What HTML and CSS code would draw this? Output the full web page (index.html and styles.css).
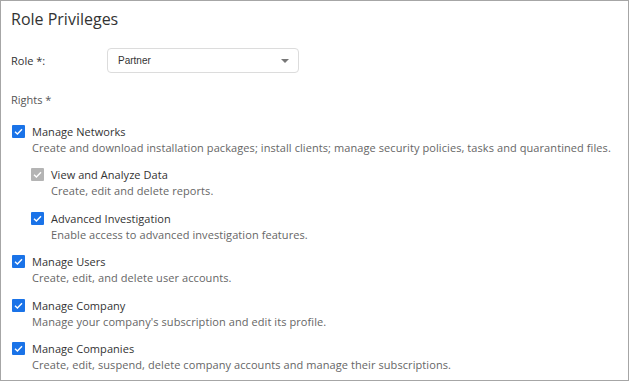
FILE: index.html
```html
<!DOCTYPE html>
<html lang="en">
<head>
  <meta charset="UTF-8">
  <title>Role Privileges</title>
  <link rel="stylesheet" href="styles.css">
</head>
<body>
  <div class="panel">
    <h2 class="title">Role Privileges</h2>

    <div class="field">
      <label class="field-label">Role *:</label>
      <div class="select">
        <span>Partner</span>
        <span class="caret"></span>
      </div>
    </div>

    <div class="rights-label">Rights *</div>

    <div class="right first">
      <span class="check"></span>
      <div>
        <div class="right-name">Manage Networks</div>
        <div class="right-desc">Create and download installation packages; install clients; manage security policies, tasks and quarantined files.</div>
      </div>
    </div>

    <div class="right sub">
      <span class="check disabled"></span>
      <div>
        <div class="right-name">View and Analyze Data</div>
        <div class="right-desc">Create, edit and delete reports.</div>
      </div>
    </div>

    <div class="right sub">
      <span class="check"></span>
      <div>
        <div class="right-name">Advanced Investigation</div>
        <div class="right-desc">Enable access to advanced investigation features.</div>
      </div>
    </div>

    <div class="right">
      <span class="check"></span>
      <div>
        <div class="right-name">Manage Users</div>
        <div class="right-desc">Create, edit, and delete user accounts.</div>
      </div>
    </div>

    <div class="right">
      <span class="check"></span>
      <div>
        <div class="right-name">Manage Company</div>
        <div class="right-desc">Manage your company's subscription and edit its profile.</div>
      </div>
    </div>

    <div class="right">
      <span class="check"></span>
      <div>
        <div class="right-name">Manage Companies</div>
        <div class="right-desc">Create, edit, suspend, delete company accounts and manage their subscriptions.</div>
      </div>
    </div>
  </div>
</body>
</html>
```

FILE: styles.css
```css
* {
  box-sizing: border-box;
}

body {
  margin: 0;
  padding: 0;
  background: white;
  font-family: 'Open Sans', sans-serif;
  color: #333;
}

.panel {
  width: 629px;
  height: 381px;
  border: 1px solid #a6a6a6;
  padding: 8px 10px 0 10px;
  overflow: hidden;
}

.title {
  margin: 0;
  font-size: 16px;
  font-weight: normal;
  line-height: 20px;
  color: #333;
}

.field {
  display: flex;
  align-items: center;
  margin-top: 19px;
}

.field-label {
  width: 96px;
  font-size: 11px;
}

.select {
  width: 192px;
  height: 25px;
  border: 1px solid #dcdcdc;
  border-radius: 4px;
  display: flex;
  align-items: center;
  justify-content: space-between;
  padding: 0 9px 0 10px;
  font-family: 'Liberation Sans', Arial, sans-serif;
  font-size: 10px;
  color: #333;
}

.caret {
  width: 0;
  height: 0;
  border-left: 4px solid transparent;
  border-right: 4px solid transparent;
  border-top: 4px solid #777;
}

.rights-label {
  margin-top: 19px;
  font-size: 11px;
  line-height: 16px;
  color: #555;
}

.right {
  display: flex;
  align-items: flex-start;
  margin-top: 11.4px;
}

.right.first {
  margin-top: 16px;
}

.right.sub {
  padding-left: 19px;
}

.check {
  flex: none;
  width: 13px;
  height: 13px;
  margin: 1px 7px 0 1px;
  border-radius: 1px;
  background: #1a73e8 url("data:image/svg+xml,%3Csvg xmlns='http://www.w3.org/2000/svg' viewBox='0 0 13 13'%3E%3Cpath d='M3 6.8l2.4 2.3L10 4.3' fill='none' stroke='white' stroke-width='1.4'/%3E%3C/svg%3E") no-repeat center;
}

.check.disabled {
  background-color: #b4b4b4;
}

.right-name {
  font-size: 11px;
  line-height: 16px;
  color: #333;
  letter-spacing: 0.05px;
}

.right-desc {
  font-size: 11px;
  line-height: 16px;
  color: #666;
  letter-spacing: 0.08px;
}
```
